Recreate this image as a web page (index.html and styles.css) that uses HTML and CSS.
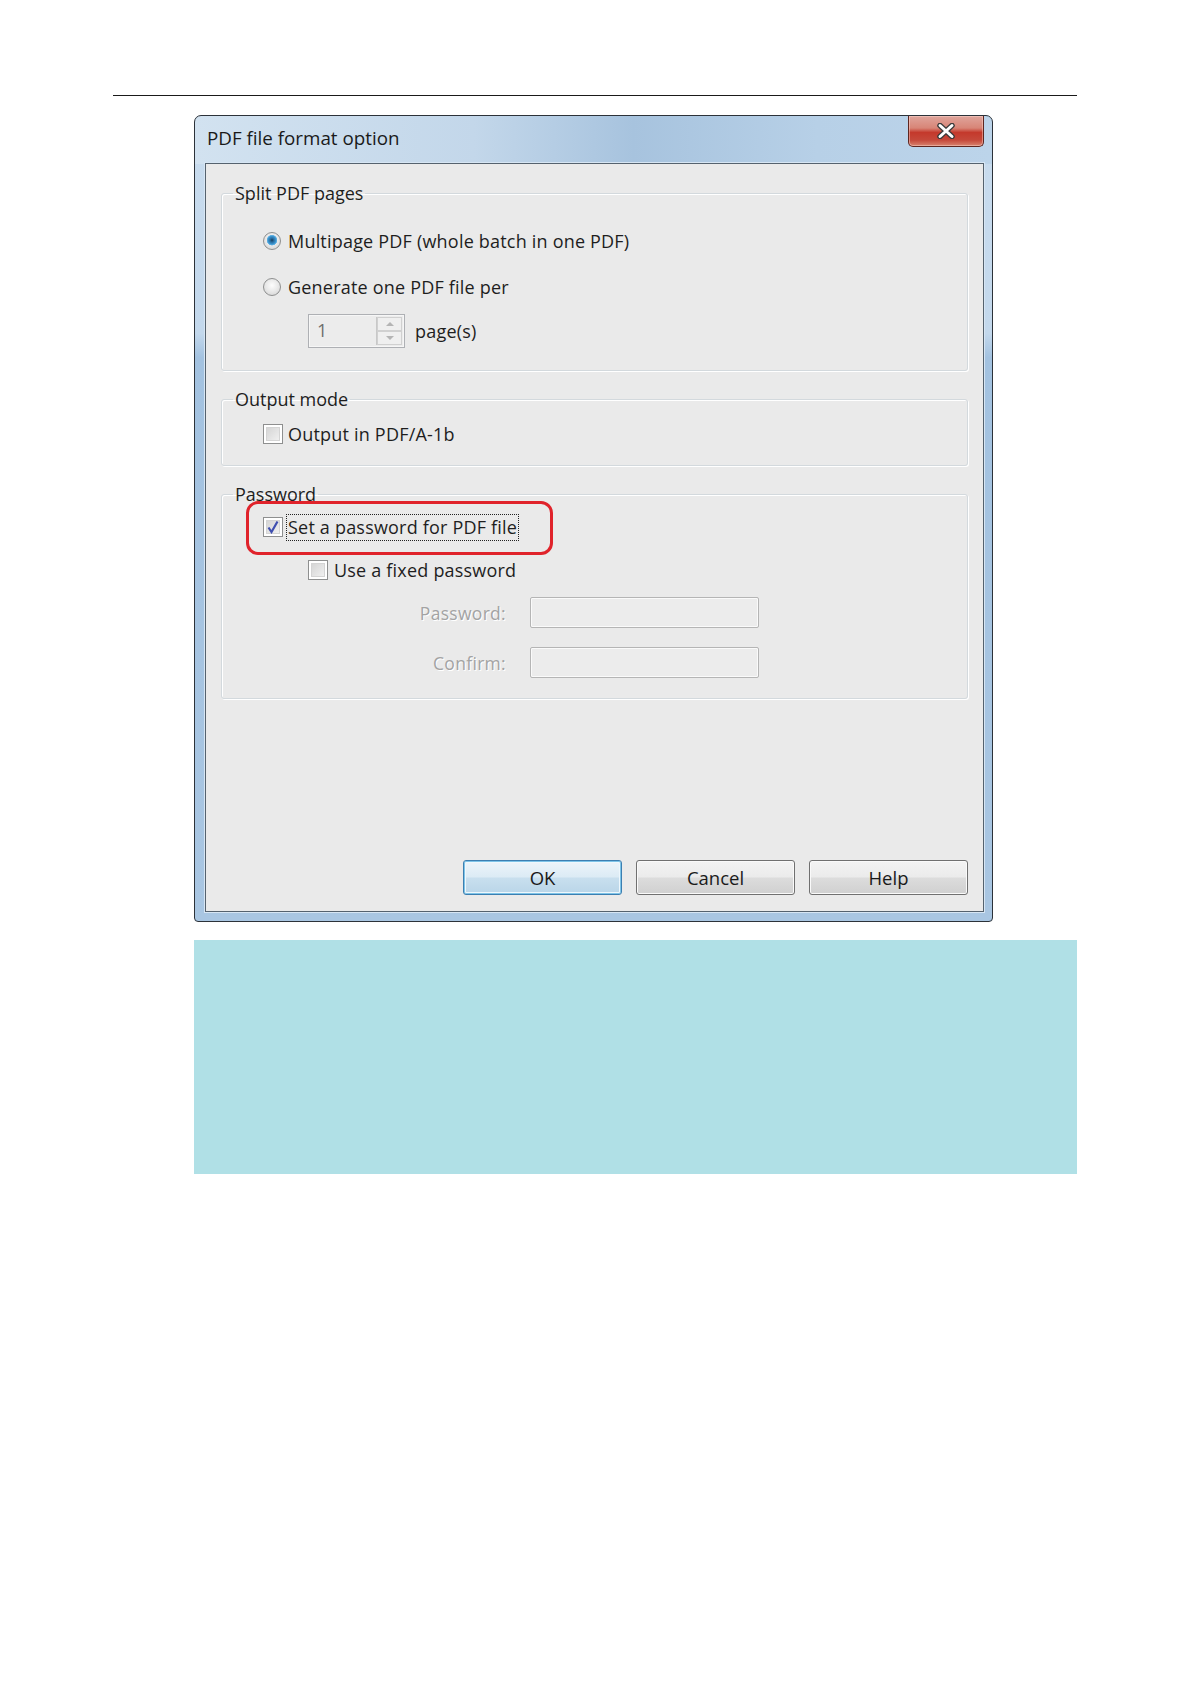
FILE: index.html
```html
<!doctype html>
<html>

<head>
	<meta charset="UTF-8">
	<title>PDF file format option</title>
	<link rel="stylesheet" href="styles.css">
</head>

<body>
	<div class="rule"></div>

	<div class="window">
		<div class="titlebar">
			<span class="title">PDF file format option</span>
			<span class="close">
				<svg width="20" height="16" viewBox="0 0 20 16">
					<path d="M4 2.5 L16 13.5 M16 2.5 L4 13.5" stroke="#3a3a3a" stroke-width="5.5" stroke-linecap="round" fill="none" />
					<path d="M4 2.5 L16 13.5 M16 2.5 L4 13.5" stroke="#fff" stroke-width="3" stroke-linecap="round" fill="none" />
				</svg>
			</span>
		</div>

		<div class="client">
			<!-- 分割 -->
			<fieldset class="group group_split">
				<legend>Split PDF pages</legend>
				<div class="opt">
					<span class="radio radio_on"></span>
					<span>Multipage PDF (whole batch in one PDF)</span>
				</div>
				<div class="opt opt_gap">
					<span class="radio"></span>
					<span>Generate one PDF file per</span>
				</div>
				<div class="pages">
					<div class="spin">
						<span class="spin_val">1</span>
						<span class="spin_btns">
							<span class="spin_up"></span>
							<span class="spin_down"></span>
						</span>
					</div>
					<span class="pages_txt">page(s)</span>
				</div>
			</fieldset>

			<!-- 输出模式 -->
			<fieldset class="group group_mode">
				<legend>Output mode</legend>
				<div class="opt">
					<span class="chk"></span>
					<span>Output in PDF/A-1b</span>
				</div>
			</fieldset>

			<!-- 密码 -->
			<fieldset class="group group_pwd">
				<legend>Password</legend>
				<div class="opt opt_mark">
					<span class="chk chk_on">
						<svg width="14" height="14" viewBox="0 0 14 14">
							<path d="M2.5 7.5 L5.5 12 L11.5 1.5" stroke="#3f4fb0" stroke-width="2.2" fill="none" />
						</svg>
					</span>
					<span class="focus">Set a password for PDF file</span>
					<span class="mark"></span>
				</div>
				<div class="opt opt_sub">
					<span class="chk"></span>
					<span>Use a fixed password</span>
				</div>
				<div class="field field_first">
					<span class="field_lbl">Password:</span>
					<span class="field_box"></span>
				</div>
				<div class="field">
					<span class="field_lbl">Confirm:</span>
					<span class="field_box"></span>
				</div>
			</fieldset>

			<div class="buttons">
				<span class="btn btn_default">OK</span>
				<span class="btn">Cancel</span>
				<span class="btn">Help</span>
			</div>
		</div>
	</div>

	<div class="note"></div>
</body>

</html>
```

FILE: styles.css
```css
* {
	box-sizing: border-box;
}

body {
	margin: 0;
	background: #fff;
	font-family: "Open Sans", "Noto Sans", sans-serif;
	font-size: 18px;
	color: #1e1e1e;
}

.rule {
	margin: 95px 0 0 113px;
	width: 964px;
	border-top: 1px solid #1a1a1a;
}

/* 窗口外框 */
.window {
	margin: 19px 0 0 194px;
	width: 799px;
	height: 807px;
	border: 1px solid #2c3239;
	border-radius: 7px 7px 4px 4px;
	padding: 0 8px 9px 10px;
	display: flex;
	flex-direction: column;
	background:
		linear-gradient(90deg, #d2e2f0 0%, #c3d7ea 35%, #a7c3de 55%, #b7d0e7 78%, #bcd4ea 100%) top / 100% 48px no-repeat,
		linear-gradient(180deg, #c9dcee 0%, #c3d8ec 27%, #a3c2e0 30%, #a9c6e2 100%);
}

.titlebar {
	height: 47px;
	display: flex;
	align-items: flex-start;
}

.title {
	padding: 10px 0 0 2px;
	font-size: 18.8px;
	line-height: 24px;
	color: #1a1a1a;
}

.close {
	margin-left: auto;
	width: 76px;
	height: 31px;
	border: 1px solid #5e2620;
	border-top: none;
	border-radius: 0 0 5px 5px;
	background: linear-gradient(180deg, #dfa59c 0%, #d88577 40%, #c4392c 55%, #c5483a 80%, #d8836f 100%);
	display: flex;
	align-items: center;
	justify-content: center;
	box-shadow: inset 0 0 0 1px rgba(255, 220, 210, .45);
}

.client {
	flex: 1;
	border: 1px solid #55626e;
	background: #eaeaea;
	padding: 0 15px 16px 15px;
	display: flex;
	flex-direction: column;
	box-shadow: 0 0 0 1px #d7e6f4;
}

/* 分组框 */
.group {
	margin: 16px 0 0 0;
	padding: 0 0 0 41px;
	border: 1px solid #d3d9dd;
	border-radius: 3px;
	box-shadow: inset 1px 1px 0 #fff, 1px 1px 0 #fff;
	min-width: 0;
}

.group legend {
	margin-left: -30px;
	padding: 0 2px;
	line-height: 24px;
	font-size: 18px;
}

.group_split {
	margin-top: 17px;
	padding-top: 24px;
	padding-bottom: 22px;
}

.group_mode {
	padding-top: 11px;
	padding-bottom: 19px;
}

.group_pwd {
	padding-top: 9px;
	padding-bottom: 20px;
}

.opt {
	height: 24px;
	display: flex;
	align-items: center;
	line-height: 24px;
	letter-spacing: .2px;
	position: relative;
}

.opt_gap {
	margin-top: 22px;
}

.opt_sub {
	margin-top: 19px;
	padding-left: 45px;
}

/* 单选框 */
.radio {
	width: 18px;
	height: 18px;
	margin-right: 7px;
	border-radius: 50%;
	border: 1px solid #8e8f8f;
	background: radial-gradient(circle at 50% 40%, #fdfdfd 0%, #e6e6e6 55%, #cfcfcf 100%);
	flex: none;
}

.radio_on {
	background:
		radial-gradient(circle at 50% 45%, #173d5c 0, #2a6fa3 2px, #3c96d0 4px, #6ab6e6 5px, transparent 5.5px),
		radial-gradient(circle at 50% 40%, #fdfdfd 0%, #e6e6e6 55%, #cfcfcf 100%);
}

/* 复选框 */
.chk {
	width: 20px;
	height: 20px;
	margin-right: 5px;
	border: 1px solid #8e8f8f;
	background: #f4f4f4;
	box-shadow: inset 0 0 0 2px #fff, inset 0 0 0 3px #d4d4d4;
	background-image: linear-gradient(135deg, #cfcfcf, #f6f6f6);
	display: flex;
	align-items: center;
	justify-content: center;
	flex: none;
}

.opt_sub .chk {
	margin-right: 6px;
}

.chk_on {
	margin-right: 4px;
}

.focus {
	padding: 0 1px;
	line-height: 25px;
	outline: 1px dotted #222;
}

/* 红色标注框 */
.mark {
	position: absolute;
	left: -17px;
	top: -14px;
	width: 307px;
	height: 54px;
	border: 3px solid #e0232b;
	border-radius: 12px;
}

/* 页数 */
.pages {
	margin: 15px 0 0 45px;
	display: flex;
	align-items: center;
}

.spin {
	width: 97px;
	height: 34px;
	border: 1px solid #aeb0b4;
	background: #ececec;
	display: flex;
	box-shadow: inset 0 0 0 1px #f6f6f6;
}

.spin_val {
	flex: 1;
	padding-left: 8px;
	line-height: 31px;
	color: #6e6e6e;
}

.spin_btns {
	width: 26px;
	margin: 2px 2px 2px 0;
	border-left: 1px solid #c8c8c8;
	display: flex;
	flex-direction: column;
}

.spin_up,
.spin_down {
	flex: 1;
	border: 1px solid #d0d0d0;
	background: #efefef;
	position: relative;
}

.spin_up::after,
.spin_down::after {
	content: "";
	position: absolute;
	left: 50%;
	top: 50%;
	margin: -2px 0 0 -4px;
	border-left: 4px solid transparent;
	border-right: 4px solid transparent;
}

.spin_up::after {
	border-bottom: 4px solid #b4b4b4;
}

.spin_down::after {
	border-top: 4px solid #b4b4b4;
}

.pages_txt {
	margin-left: 10px;
	letter-spacing: .2px;
}

/* 禁用的输入框 */
.field {
	margin-top: 19px;
	display: flex;
	align-items: center;
}

.field_first {
	margin-top: 15px;
}

.field_lbl {
	width: 243px;
	text-align: right;
	font-size: 17.5px;
	color: #a3a3a3;
	text-shadow: 1px 1px 0 #fff;
	letter-spacing: .3px;
}

.field_box {
	margin-left: 24px;
	width: 229px;
	height: 31px;
	border: 1px solid #b5b5b5;
	border-radius: 2px;
	background: #ececec;
	box-shadow: inset 0 0 0 1px #fafafa;
}

/* 按钮 */
.buttons {
	margin-top: auto;
	display: flex;
	justify-content: flex-end;
	gap: 14px;
}

.btn {
	width: 159px;
	height: 35px;
	border: 1px solid #707070;
	border-radius: 3px;
	background: linear-gradient(180deg, #f3f3f3 0%, #ebebeb 48%, #dcdcdc 52%, #d0d0d0 100%);
	box-shadow: inset 0 0 0 1px #fafafa;
	display: flex;
	align-items: center;
	justify-content: center;
	font-size: 18.5px;
	color: #1a1a1a;
}

.btn_default {
	border-color: #3c7fb1;
	background: linear-gradient(180deg, #edf5fa 0%, #dcebf5 48%, #c8dfee 52%, #b9d5e8 100%);
	box-shadow: inset 0 0 0 1px #7ec4e8, inset 0 0 0 2px #eef7fc;
}

/* 说明框 */
.note {
	margin: 18px 0 0 194px;
	width: 883px;
	height: 234px;
	background: #b0e0e6;
}
```
